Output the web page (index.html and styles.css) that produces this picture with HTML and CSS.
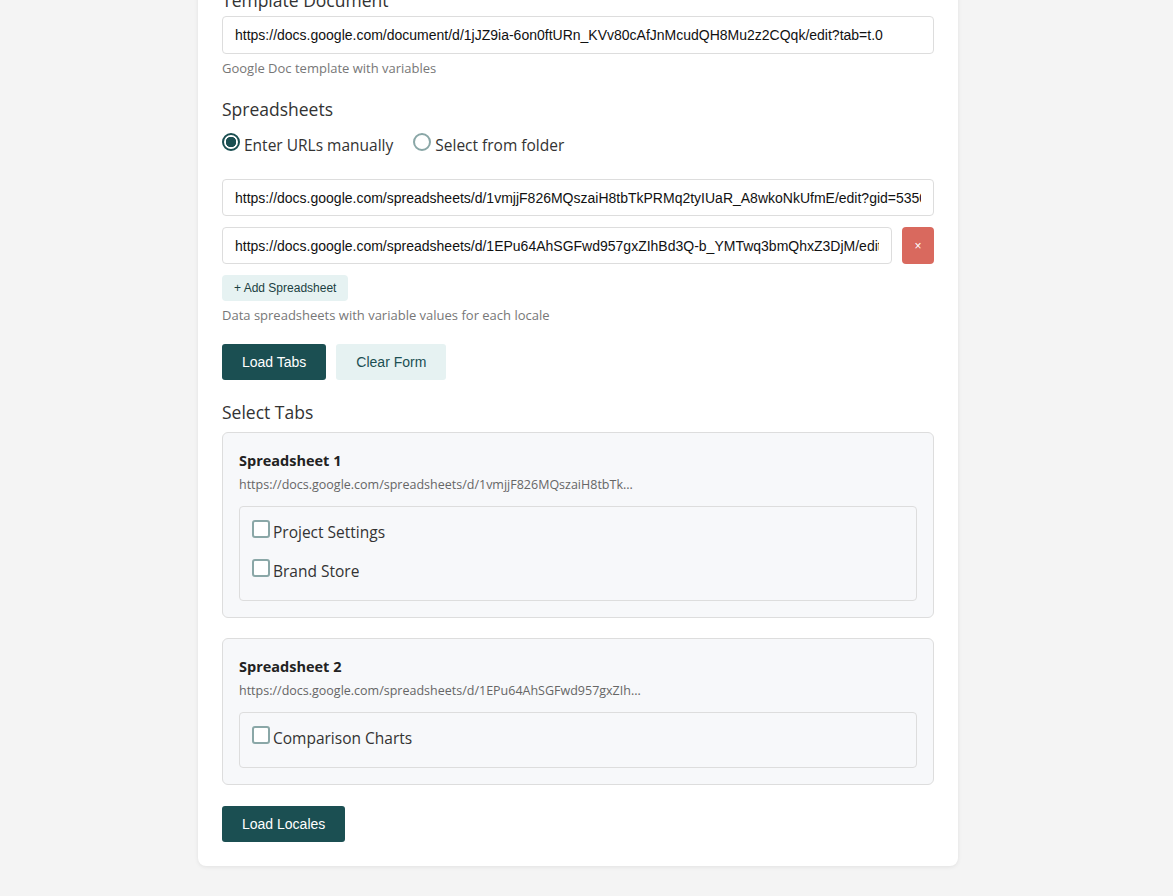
FILE: index.html
```html
<!DOCTYPE html>
<html lang="en">
<head>
<meta charset="utf-8">
<title>Locale Generator</title>
<link rel="stylesheet" href="styles.css">
</head>
<body>
<main class="panel">
  <section class="field">
    <label class="field-label" for="template">Template Document</label>
    <input id="template" class="text-input text-input-tall" type="text" value="https://docs.google.com/document/d/1jJZ9ia-6on0ftURn_KVv80cAfJnMcudQH8Mu2z2CQqk/edit?tab=t.0">
    <p class="hint">Google Doc template with variables</p>
  </section>

  <section class="field">
    <div class="field-label">Spreadsheets</div>
    <div class="radio-row">
      <label class="radio"><input type="radio" name="source" checked><span>Enter URLs manually</span></label>
      <label class="radio"><input type="radio" name="source"><span>Select from folder</span></label>
    </div>
    <div class="url-list">
      <div class="url-row">
        <input class="text-input" type="text" value="https://docs.google.com/spreadsheets/d/1vmjjF826MQszaiH8tbTkPRMq2tyIUaR_A8wkoNkUfmE/edit?gid=535066">
      </div>
      <div class="url-row">
        <input class="text-input" type="text" value="https://docs.google.com/spreadsheets/d/1EPu64AhSGFwd957gxZIhBd3Q-b_YMTwq3bmQhxZ3DjM/edit">
        <button class="btn-remove" type="button">×</button>
      </div>
    </div>
    <button class="btn-add" type="button">+ Add Spreadsheet</button>
    <p class="hint">Data spreadsheets with variable values for each locale</p>
  </section>

  <div class="actions">
    <button class="btn btn-primary" type="button">Load Tabs</button>
    <button class="btn btn-light" type="button">Clear Form</button>
  </div>

  <section class="field tabs-section">
    <div class="field-label">Select Tabs</div>
    <div class="sheet">
      <h3 class="sheet-title">Spreadsheet 1</h3>
      <div class="sheet-url">https://docs.google.com/spreadsheets/d/1vmjjF826MQszaiH8tbTk...</div>
      <div class="tab-list">
        <label class="check"><input type="checkbox"><span>Project Settings</span></label>
        <label class="check"><input type="checkbox"><span>Brand Store</span></label>
      </div>
    </div>
    <div class="sheet">
      <h3 class="sheet-title">Spreadsheet 2</h3>
      <div class="sheet-url">https://docs.google.com/spreadsheets/d/1EPu64AhSGFwd957gxZIh...</div>
      <div class="tab-list">
        <label class="check"><input type="checkbox"><span>Comparison Charts</span></label>
      </div>
    </div>
  </section>

  <button class="btn btn-primary" type="button">Load Locales</button>
</main>
</body>
</html>
```

FILE: styles.css
```css
html, body {
  margin: 0;
  padding: 0;
}

body {
  background: #f4f4f4;
  font-family: "Open Sans", "Noto Sans", sans-serif;
  color: #333;
  height: 896px;
  overflow: hidden;
}

.panel {
  width: 760px;
  box-sizing: border-box;
  margin: -20px auto 0 198px;
  padding: 8px 24px 24px;
  background: #fff;
  border-radius: 8px;
  box-shadow: 0 1px 4px rgba(0, 0, 0, 0.08);
}

.field {
  margin-bottom: 20px;
}

.field-label {
  display: block;
  font-size: 17.5px;
  line-height: 24px;
  color: #333;
  margin-bottom: 4px;
}

.text-input {
  display: block;
  width: 100%;
  box-sizing: border-box;
  height: 37px;
  padding: 0 12px;
  border: 1px solid #ddd;
  border-radius: 4px;
  font-family: "Liberation Sans", Arial, sans-serif;
  font-size: 14px;
  color: #111;
  background: #fff;
}

.text-input-tall {
  height: 38px;
}

.hint {
  margin: 5px 0 0;
  font-size: 13px;
  line-height: 18px;
  color: #777;
}

.radio-row {
  display: flex;
  gap: 20px;
  margin: 12px 0 22px;
}

.radio {
  display: flex;
  align-items: center;
  font-size: 15.5px;
  line-height: 24px;
  color: #333;
}

.radio input {
  appearance: none;
  width: 18px;
  height: 18px;
  margin: 0 4px 0 0;
  border: 2px solid #8aa7a7;
  border-radius: 50%;
  position: relative;
  top: -3px;
  box-sizing: border-box;
}

.radio input:checked {
  border-color: #1b4f52;
  background: radial-gradient(circle, #1b4f52 0 5px, #fff 5.5px);
}

.url-list {
  display: flex;
  flex-direction: column;
  gap: 11px;
  margin-bottom: 11px;
}

.url-row {
  display: flex;
  gap: 10px;
}

.btn-remove {
  flex: 0 0 32px;
  height: 37px;
  border: 0;
  border-radius: 4px;
  background: #d9695e;
  color: #fff;
  font-size: 12px;
  padding: 0;
}

.btn-add {
  height: 26px;
  padding: 0 12px;
  border: 0;
  border-radius: 4px;
  background: #e6f2f2;
  color: #1b3f42;
  font-family: "Liberation Sans", Arial, sans-serif;
  font-size: 12px;
}

.actions {
  display: flex;
  gap: 10px;
  margin-bottom: 20px;
}

.btn {
  height: 36px;
  padding: 0 20px;
  border: 0;
  border-radius: 3px;
  font-family: "Liberation Sans", Arial, sans-serif;
  font-size: 14px;
}

.btn-primary {
  background: #1b4f52;
  color: #fff;
}

.btn-light {
  background: #e6f2f2;
  color: #1b4f52;
}

.tabs-section {
  margin-bottom: 21px;
}

.tabs-section .field-label {
  margin-bottom: 8px;
}

.sheet {
  background: #f7f8fa;
  border: 1px solid #ddd;
  border-radius: 6px;
  padding: 16px 16px 16px;
  margin-bottom: 20px;
}

.sheet:last-child {
  margin-bottom: 0;
}

.sheet-title {
  margin: 2px 0 6px;
  font-size: 14.5px;
  font-weight: 700;
  line-height: 20px;
  color: #222;
}

.sheet-url {
  font-size: 12.5px;
  line-height: 16px;
  color: #666;
  margin-bottom: 13px;
}

.tab-list {
  border: 1px solid #ddd;
  border-radius: 4px;
  padding: 13px 12px 17px;
  display: flex;
  flex-direction: column;
  gap: 15px;
}

.check {
  display: flex;
  align-items: center;
  font-size: 15.5px;
  color: #333;
  line-height: 24px;
}

.check input {
  appearance: none;
  width: 18px;
  height: 18px;
  margin: 0 3px 0 0;
  border: 2px solid #8aa7a7;
  border-radius: 3px;
  background: #fff;
  box-sizing: border-box;
  position: relative;
  top: -3px;
}
```
